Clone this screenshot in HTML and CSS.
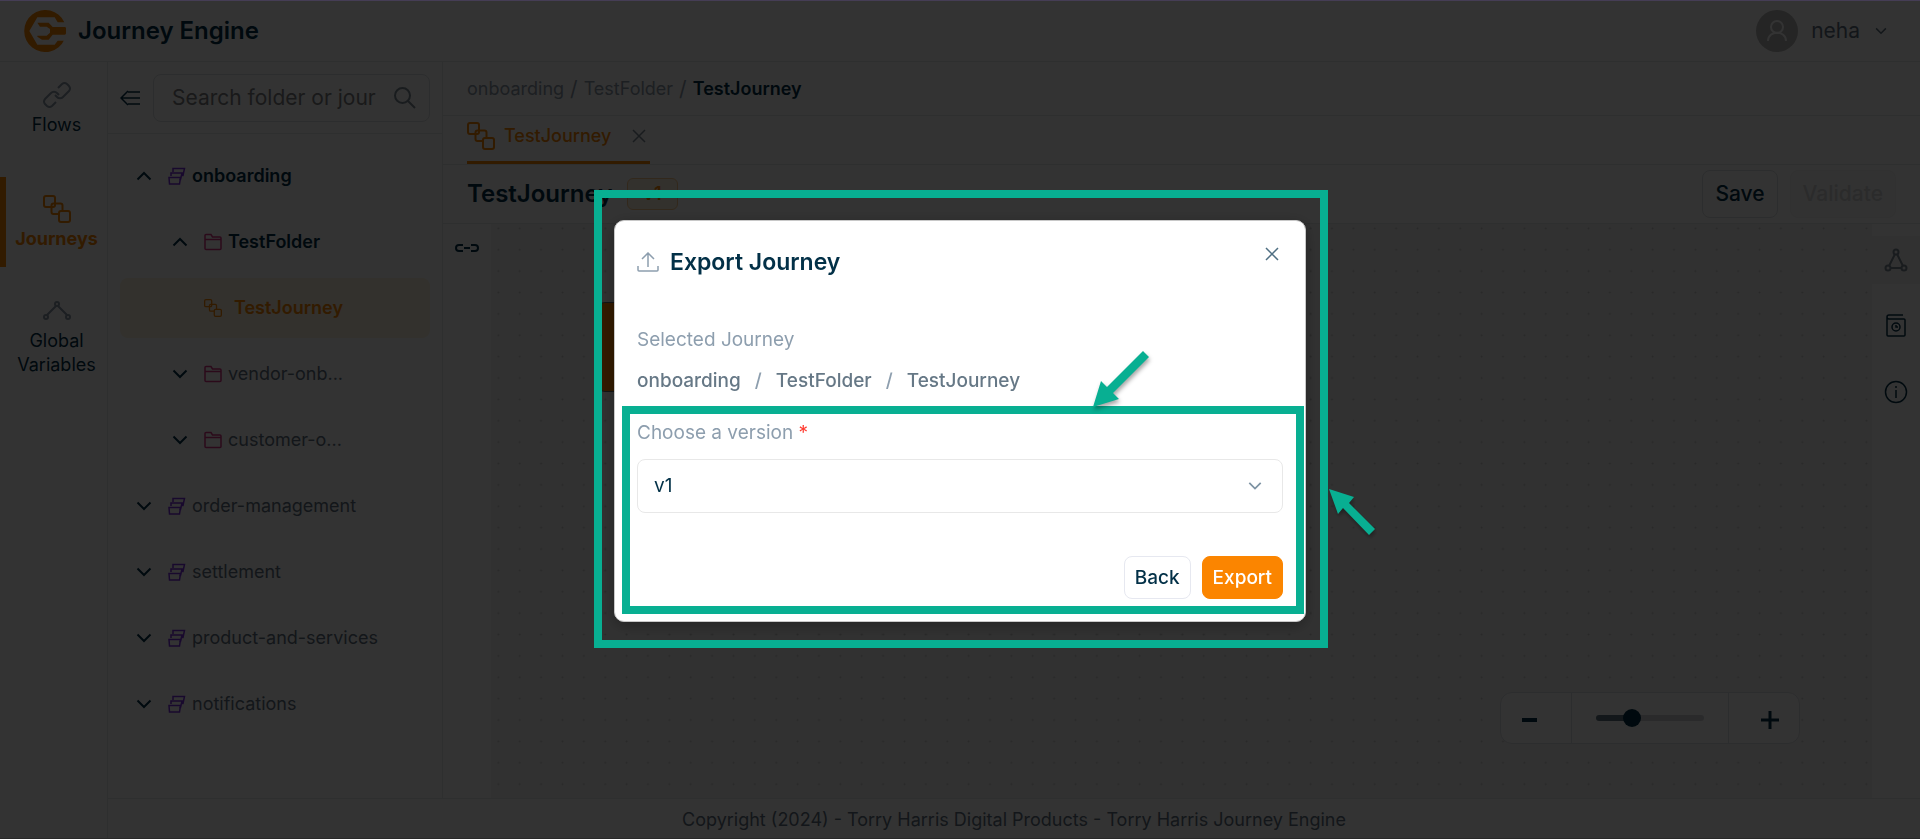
FILE: index.html
```html
<!DOCTYPE html>
<html lang="en">
<head>
  <meta charset="UTF-8">
  <meta name="viewport" content="width=device-width, initial-scale=1.0">
  <title>Journey Engine</title>
  <link rel="stylesheet" href="styles.css">
</head>
<body>
  <!-- shared icons -->
  <svg class="sprite" width="0" height="0" aria-hidden="true">
    <symbol id="i-journey" viewBox="0 0 28 28">
      <rect x="1" y="1" width="11" height="11" rx="2"/>
      <path d="M12 8.500h5.500a2 2 0 0 1 2 2v5.500M8.500 12v5a2 2 0 0 0 2 2h5.500M8.500 12v-1.500a2 2 0 0 1 2-2H12"/>
      <rect x="16" y="16" width="11" height="11" rx="2"/>
    </symbol>
    <symbol id="i-stack" viewBox="0 0 18 18">
      <path d="M5 5V1.500h11.500l-1.500 7h-2M3 9V6h11l-1.500 6.500h-1"/>
      <path d="M1 10.500h11.500l-1 6.500H1.500z"/>
    </symbol>
    <symbol id="i-folder" viewBox="0 0 18 18">
      <path d="M1 15.500v-13a1 1 0 0 1 1-1h5l1.500 2.500H16a1 1 0 0 1 1 1v10.500a1 1 0 0 1-1 1H2a1 1 0 0 1-1-1zM1 6.500h16"/>
    </symbol>
    <symbol id="i-down" viewBox="0 0 16 16"><path d="M1.500 4.500L8 11l6.500-6.500"/></symbol>
    <symbol id="i-up" viewBox="0 0 16 16"><path d="M1.500 11.500L8 5l6.500 6.500"/></symbol>
    <symbol id="i-close" viewBox="0 0 14 14"><path d="M1 1l12 12M13 1L1 13"/></symbol>
  </svg>

  <div class="app">
    <header class="header">
      <svg class="logo" viewBox="0 0 126 126">
        <path fill="#fb8500" d="M121 37A63 63 0 1 0 121 89L119 92H101L92 104H40L16 63L40 22H92L101 37z"/>
        <path fill="#fb8500" d="M40 38H74L86 51H122a4 4 0 0 1 4 4V70a4 4 0 0 1-4 4H86L74 89H54L40 80V77H68L78 68V57L68 50H48z"/>
      </svg>
      <h1>Journey Engine</h1>
      <button class="user">
        <span class="avatar">
          <svg width="22" height="24" viewBox="0 0 22 24"><circle cx="11" cy="8" r="6"/><path d="M2 22c0-11 18-11 18 0"/></svg>
        </span>
        <span>neha</span>
        <svg class="user-arrow" width="12" height="12"><use href="#i-down"/></svg>
      </button>
    </header>

    <div class="body">
      <nav class="nav">
        <a href="#" class="nav-item first">
          <svg width="28" height="28" viewBox="0 0 28 28"><path d="M15 7l4-4a4 4 0 0 1 5 0l2 2a4 4 0 0 1 0 5l-6 6a4 4 0 0 1-6 0l-2-2M13 21l-4 4a4 4 0 0 1-5 0l-2-2a4 4 0 0 1 0-5l6-6a4 4 0 0 1 6 0l2 2"/></svg>
          Flows
        </a>
        <a href="#" class="nav-item active">
          <svg width="28" height="28"><use href="#i-journey"/></svg>
          Journeys
        </a>
        <a href="#" class="nav-item">
          <svg width="28" height="28" viewBox="0 0 28 28"><circle cx="14" cy="7" r="2"/><circle cx="3" cy="20" r="2"/><circle cx="25" cy="20" r="2"/><path d="M13 9L4 18M15 9l9 9"/></svg>
          Global Variables
        </a>
      </nav>

      <aside class="explorer">
        <div class="explorer-head">
          <button class="icon-btn" aria-label="Collapse">
            <svg class="thin" width="21" height="16" viewBox="0 0 21 16"><path d="M8 2h12M2 8h18M8 14h12M8 1L1 8l7 7"/></svg>
          </button>
          <div class="search">
            <input type="text" aria-label="Search" placeholder="Search folder or journey">
            <svg width="22" height="22" viewBox="0 0 22 22"><circle cx="8.500" cy="8.500" r="7.500"/><path d="M14 14l7 7"/></svg>
          </div>
        </div>
        <ul class="tree">
          <li class="row open"><svg class="arrow"><use href="#i-up"/></svg><svg class="stack"><use href="#i-stack"/></svg>onboarding</li>
          <li class="row open level-2"><svg class="arrow"><use href="#i-up"/></svg><svg class="folder"><use href="#i-folder"/></svg>TestFolder</li>
          <li class="row level-3 selected"><svg class="leaf"><use href="#i-journey"/></svg>TestJourney</li>
          <li class="row level-2"><svg class="arrow"><use href="#i-down"/></svg><svg class="folder"><use href="#i-folder"/></svg>vendor-onb...</li>
          <li class="row level-2"><svg class="arrow"><use href="#i-down"/></svg><svg class="folder"><use href="#i-folder"/></svg>customer-o...</li>
          <li class="row"><svg class="arrow"><use href="#i-down"/></svg><svg class="stack"><use href="#i-stack"/></svg>order-management</li>
          <li class="row"><svg class="arrow"><use href="#i-down"/></svg><svg class="stack"><use href="#i-stack"/></svg>settlement</li>
          <li class="row"><svg class="arrow"><use href="#i-down"/></svg><svg class="stack"><use href="#i-stack"/></svg>product-and-services</li>
          <li class="row"><svg class="arrow"><use href="#i-down"/></svg><svg class="stack"><use href="#i-stack"/></svg>notifications</li>
        </ul>
      </aside>

      <main class="main">
        <div class="crumbs">
          <a href="#">onboarding</a><span class="slash">/</span><a href="#">TestFolder</a><span class="slash">/</span><b>TestJourney</b>
        </div>
        <div class="tabs">
          <div class="tab">
            <svg width="28" height="28"><use href="#i-journey"/></svg>
            <span>TestJourney</span>
            <button class="icon-btn tab-close" aria-label="Close tab"><svg class="thin" width="14" height="14"><use href="#i-close"/></svg></button>
          </div>
        </div>
        <div class="title-bar">
          <h2>TestJourney</h2>
          <span class="badge">v1</span>
          <button class="btn save">Save</button>
          <button class="btn validate" disabled>Validate</button>
        </div>
        <div class="workspace">
          <div class="tools-left">
            <button class="icon-btn" aria-label="Link"><svg width="24" height="8" viewBox="0 0 24 8"><path d="M8 1H4a3 3 0 0 0 0 6h4M9 4h6M16 1h4a3 3 0 0 1 0 6h-4"/></svg></button>
          </div>
          <div class="canvas">
            <svg class="dots" width="100%" height="100%">
              <defs>
                <pattern id="grid" width="64" height="64" patternUnits="userSpaceOnUse" patternTransform="scale(0.334)">
                  <circle cx="22" cy="13" r="3" fill="#c8c8c8"/>
                </pattern>
              </defs>
              <rect width="100%" height="100%" fill="url(#grid)"/>
            </svg>
            <div class="node"></div>
            <div class="zoom">
              <button class="zoom-out" aria-label="Zoom out"><svg width="16" height="4"><path d="M0 2h15"/></svg></button>
              <div class="zoom-slider"><input type="range" min="0" max="100" value="30" aria-label="Zoom"></div>
              <button class="zoom-in" aria-label="Zoom in"><svg width="18" height="18" viewBox="0 0 18 18"><path d="M0 9h18M9 0v18"/></svg></button>
            </div>
          </div>
          <div class="tools-right">
            <button class="tool dim" aria-label="Graph"><svg width="24" height="24" viewBox="0 0 24 24"><circle cx="12" cy="4" r="2.500"/><circle cx="4" cy="20" r="2.500"/><circle cx="20" cy="20" r="2.500"/><path d="M11 6L5 18M13 6l6 12M7 20h10"/></svg></button>
            <button class="tool" aria-label="History"><svg class="thin" width="24" height="24" viewBox="0 0 24 24"><path d="M19 1H5a2 2 0 0 0-2 2v18a1 1 0 0 0 1 1h16a1 1 0 0 0 1-1V6a1 1 0 0 0-1-1H5a2 2 0 0 1-2-2"/><circle cx="12" cy="13" r="4"/><path d="M12 11v2h2"/></svg></button>
            <button class="tool" aria-label="Info"><svg class="thin" width="24" height="24" viewBox="0 0 24 24"><circle cx="12" cy="12" r="10.500"/><path d="M12 10v8M12 6v2"/></svg></button>
          </div>
        </div>
      </main>
      <footer class="footer">Copyright (2024) - Torry Harris Digital Products - Torry Harris Journey Engine</footer>
    </div>
  </div>

  <div class="overlay">
    <form class="modal">
      <div class="modal-head">
        <svg class="thin" width="22" height="20" viewBox="0 0 22 20"><path d="M1 14v4a1 1 0 0 0 1 1h18a1 1 0 0 0 1-1v-4M11 15V1M5 7l6-6 6 6"/></svg>
        <h3>Export Journey</h3>
        <button type="button" class="icon-btn modal-close" aria-label="Close"><svg class="thin" width="14" height="14"><use href="#i-close"/></svg></button>
      </div>
      <p class="label">Selected Journey</p>
      <p class="path"><span>onboarding</span><i>/</i><span>TestFolder</span><i>/</i><span>TestJourney</span></p>
      <label class="label version-label" for="version">Choose a version <em>*</em></label>
      <div class="select">
        <select id="version"><option>v1</option></select>
        <svg width="14" height="14"><use href="#i-down"/></svg>
      </div>
      <div class="actions">
        <button type="button" class="back">Back</button>
        <button type="button" class="export">Export</button>
      </div>

      <!-- highlights drawn over the dialog -->
      <div class="mark mark-outer"></div>
      <div class="mark mark-inner"></div>
      <svg class="pointer pointer-top" width="60" height="60" viewBox="0 0 60 60"><path d="M0 56L8 30l6 6L50 0l6 6L20 42l6 6z"/></svg>
      <svg class="pointer pointer-side" width="50" height="50" viewBox="0 0 50 50"><path d="M0 0l25 8-5 6 26 26-6 6-26-27-5 6z"/></svg>
    </form>
  </div>
</body>
</html>
```
FILE: styles.css
```css
* {
  box-sizing: border-box;
}
body {
  margin: 0;
  font-family: Inter, 'Liberation Sans', sans-serif;
  font-size: 18px;
  line-height: 24px;
  color: #023047;
  background: #fff;
}
h1, h2, h3, p, ul {
  margin: 0;
  padding: 0;
}
a {
  color: inherit;
  text-decoration: none;
}
button, input, select {
  font: inherit;
  color: inherit;
}
button {
  padding: 0;
  border: none;
  background: none;
  cursor: pointer;
}
svg {
  fill: none;
  stroke: currentColor;
  stroke-width: 2;
  flex-shrink: 0;
}
.thin {
  stroke-width: 1.5;
}
.sprite {
  position: absolute;
}
.icon-btn {
  display: flex;
}

/* page */
.app {
  display: flex;
  flex-direction: column;
  min-height: 100vh;
}
.header {
  display: flex;
  align-items: center;
  height: 62px;
  padding: 0 33px 0 24px;
  border-bottom: 1px solid #e6e8ea;
}
.logo {
  width: 42px;
  height: 42px;
  margin-right: 12px;
  stroke: none;
}
h1, h2, h3 {
  font-size: 24px;
  line-height: 30px;
  font-weight: 600;
}
.user {
  display: flex;
  align-items: center;
  gap: 13px;
  margin-left: auto;
  font-size: 21px;
  color: #5f7180;
}
.avatar {
  display: flex;
  align-items: center;
  justify-content: center;
  width: 42px;
  height: 42px;
  border-radius: 50%;
  background: #b8b8b8;
  color: #fff;
}
.user-arrow {
  margin-left: 2px;
}
.body {
  flex: 1;
  display: grid;
  grid-template-columns: 108px 335px 1fr;
  grid-template-rows: 1fr 41px;
}
.nav {
  grid-row: span 2;
  border-right: 1px solid #e6e8ea;
}
.nav-item {
  display: flex;
  flex-direction: column;
  align-items: center;
  gap: 4px;
  min-height: 90px;
  margin-bottom: 12px;
  padding-top: 18px;
  border-left: 6px solid transparent;
  text-align: center;
}
.nav-item svg {
  color: #8d9aa8;
}
.nav-item.first {
  margin: 1px 0 24px;
}
.nav-item.active {
  border-color: #fb8500;
  color: #fb8500;
  font-weight: 700;
}
.nav-item.active svg {
  color: #fb8500;
}

/* explorer */
.explorer {
  border-right: 1px solid #e6e8ea;
}
.explorer-head {
  display: flex;
  align-items: center;
  gap: 12px;
  height: 72px;
  padding: 0 12px;
  border-bottom: 1px solid #e6e8ea;
}
.search {
  flex: 1;
  display: flex;
  align-items: center;
  gap: 18px;
  min-width: 0;
  height: 48px;
  padding: 0 13px 0 18px;
  border: 1px solid #dcdfe3;
  border-radius: 8px;
  color: #7d8a97;
}
.search input {
  flex: 1;
  min-width: 0;
  padding: 0;
  border: none;
  background: none;
  font-size: 21px;
}
.search input::placeholder {
  color: #7d7f82;
}
.tree {
  padding: 12px;
  list-style: none;
}
.row {
  display: flex;
  align-items: center;
  height: 60px;
  margin-bottom: 6px;
  padding-left: 16px;
  border-radius: 8px;
  color: #5f7180;
}
.row svg {
  width: 18px;
  height: 18px;
  margin-right: 6px;
}
.row svg.arrow {
  width: 16px;
  height: 16px;
  margin-right: 16px;
  color: #023047;
}
.row.open {
  color: #023047;
  font-weight: 600;
}
.level-2 {
  padding-left: 52px;
}
.level-3 {
  padding-left: 84px;
}
.row.selected {
  background: #fff3df;
  color: #fb8500;
  font-weight: 600;
}
.row svg.leaf {
  margin-right: 12px;
}
.stack {
  color: #7b2fe0;
  stroke-width: 1.5;
}
.folder {
  color: #d63384;
  stroke-width: 1.5;
}

/* main */
.main {
  display: flex;
  flex-direction: column;
  min-width: 0;
}
.crumbs {
  display: flex;
  align-items: center;
  gap: 6px;
  height: 54px;
  padding-left: 24px;
  border-bottom: 1px solid #e6e8ea;
  color: #8d9aa8;
}
.crumbs .slash {
  font-size: 21px;
}
.crumbs b {
  color: #023047;
  font-weight: 600;
}
.tabs {
  display: flex;
  height: 49px;
  padding-left: 24px;
  border-bottom: 1px solid #e6e8ea;
}
.tab {
  display: flex;
  align-items: center;
  gap: 9px;
  padding: 0 4px 6px 0;
  border-bottom: 3px solid #fb8500;
  color: #fb8500;
  font-weight: 500;
}
.tab-close {
  margin-left: 12px;
  color: #7d8a97;
}
.title-bar {
  display: flex;
  align-items: center;
  gap: 12px;
  height: 59px;
  padding: 0 24px;
  border-bottom: 1px solid #e6e8ea;
}
.badge {
  margin-left: 3px;
  padding: 3px 15px;
  border: 1px solid #fbc98a;
  border-radius: 6px;
  background: #fff3df;
  color: #fb8500;
  font-weight: 600;
}
.btn {
  height: 48px;
  padding: 0 12px;
  border: 1px solid #dcdfe3;
  border-radius: 8px;
  font-size: 21px;
  font-weight: 500;
}
.save {
  margin-left: auto;
}
.validate {
  border-color: #f4f4f4;
  background: #fafafa;
  color: #d4d6d8;
}
.workspace {
  flex: 1;
  display: flex;
}
.tools-left {
  width: 48px;
  padding: 20px 12px;
}
.canvas {
  position: relative;
  flex: 1;
  display: flex;
  align-items: flex-end;
  justify-content: flex-end;
  padding: 54px 72px;
  background: #f6f6f6;
}
.dots {
  position: absolute;
  inset: 0;
  stroke: none;
}
.node {
  position: absolute;
  left: 106px;
  top: 78px;
  width: 90px;
  height: 90px;
  border: 1px solid #5b6770;
  border-radius: 8px;
  background: #fb8500;
}
.zoom {
  position: relative;
  display: flex;
  height: 52px;
  border: 1px solid #dcdfe3;
  border-radius: 12px;
  background: #fff;
}
.zoom button {
  display: flex;
  align-items: center;
  justify-content: center;
  width: 70px;
  padding-top: 4px;
}
.zoom-out svg {
  margin-right: 12px;
  stroke-width: 4;
}
.zoom-in svg {
  margin-left: 12px;
  stroke-width: 3;
}
.zoom-slider {
  display: flex;
  align-items: center;
  width: 158px;
  padding: 0 24px;
  border: 1px solid #dcdfe3;
  border-width: 0 1px;
}
.zoom-slider input {
  appearance: none;
  width: 100%;
  height: 6px;
  margin: 0;
  border-radius: 3px;
  background: linear-gradient(to right, #5f7480 33%, #cfd2d6 33%);
}
.zoom-slider input::-webkit-slider-thumb {
  appearance: none;
  width: 18px;
  height: 18px;
  border-radius: 50%;
  background: #023047;
}
.tools-right {
  display: flex;
  flex-direction: column;
  gap: 18px;
  width: 48px;
  padding-top: 12px;
}
.tool {
  display: flex;
  align-items: center;
  justify-content: center;
  height: 48px;
}
.tool.dim {
  background: #f6f6f6;
  color: #7d8a97;
}
.footer {
  grid-column: 2 / 4;
  display: flex;
  align-items: center;
  justify-content: center;
  padding-top: 2px;
  border-top: 1px solid #e6e8ea;
  color: #5f7180;
}

/* dialog */
.overlay {
  position: fixed;
  inset: 0;
  display: flex;
  align-items: center;
  justify-content: center;
  padding-top: 3px;
  border-top: 1px solid #453d55;
  border-bottom: 1px solid #292929;
  background: rgba(0, 0, 0, 0.8);
}
.modal {
  position: relative;
  width: 692px;
  padding: 22px;
  border: 1px solid #c8c8c8;
  border-radius: 10px;
  background: #fff;
  box-shadow: 0 4px 16px rgba(0, 0, 0, 0.3);
  font-size: 19px;
}
.modal-head {
  display: flex;
  align-items: center;
  gap: 11px;
  margin-bottom: 51px;
  padding-top: 4px;
  color: #8d9eae;
}
.modal-head h3 {
  color: #023047;
  font-size: 23px;
}
.modal-close {
  align-self: flex-start;
  margin: 0 4px 0 auto;
  color: #4f6f82;
}
.label {
  display: block;
  color: #8d9eae;
}
.path {
  display: flex;
  gap: 14px;
  margin: 17px 0 28px;
  color: #667886;
  font-weight: 500;
}
.path i {
  color: #8d9eae;
  font-style: normal;
}
.version-label em {
  color: #ff3b30;
  font-style: normal;
}
.select {
  position: relative;
  margin: 14px 0 43px;
  color: #7d93a3;
}
.select select {
  display: block;
  appearance: none;
  width: 100%;
  height: 54px;
  padding: 0 16px;
  border: 1px solid #e8e8e8;
  border-radius: 8px;
  background: #fff;
  color: #023047;
}
.select svg {
  position: absolute;
  right: 21px;
  top: 20px;
}
.actions {
  display: flex;
  justify-content: flex-end;
  gap: 11px;
}
.actions button {
  height: 43px;
  padding: 0 10px;
  border: 1px solid #e6e8f0;
  border-radius: 8px;
  font-weight: 500;
}
.actions .export {
  border-color: #fb8500;
  background: #fb8500;
  color: #fff;
}
.mark {
  position: absolute;
  border: 8px solid #08af92;
  pointer-events: none;
}
.mark-outer {
  inset: -31px -23px -27px -21px;
}
.mark-inner {
  inset: 185px 1px 7px 7px;
}
.pointer {
  position: absolute;
  overflow: visible;
  fill: #08af92;
  stroke: none;
  filter: drop-shadow(1px 3px 2px rgba(0, 0, 0, 0.35));
}
.pointer-top {
  left: 478px;
  top: 130px;
}
.pointer-side {
  left: 714px;
  top: 268px;
}
```
